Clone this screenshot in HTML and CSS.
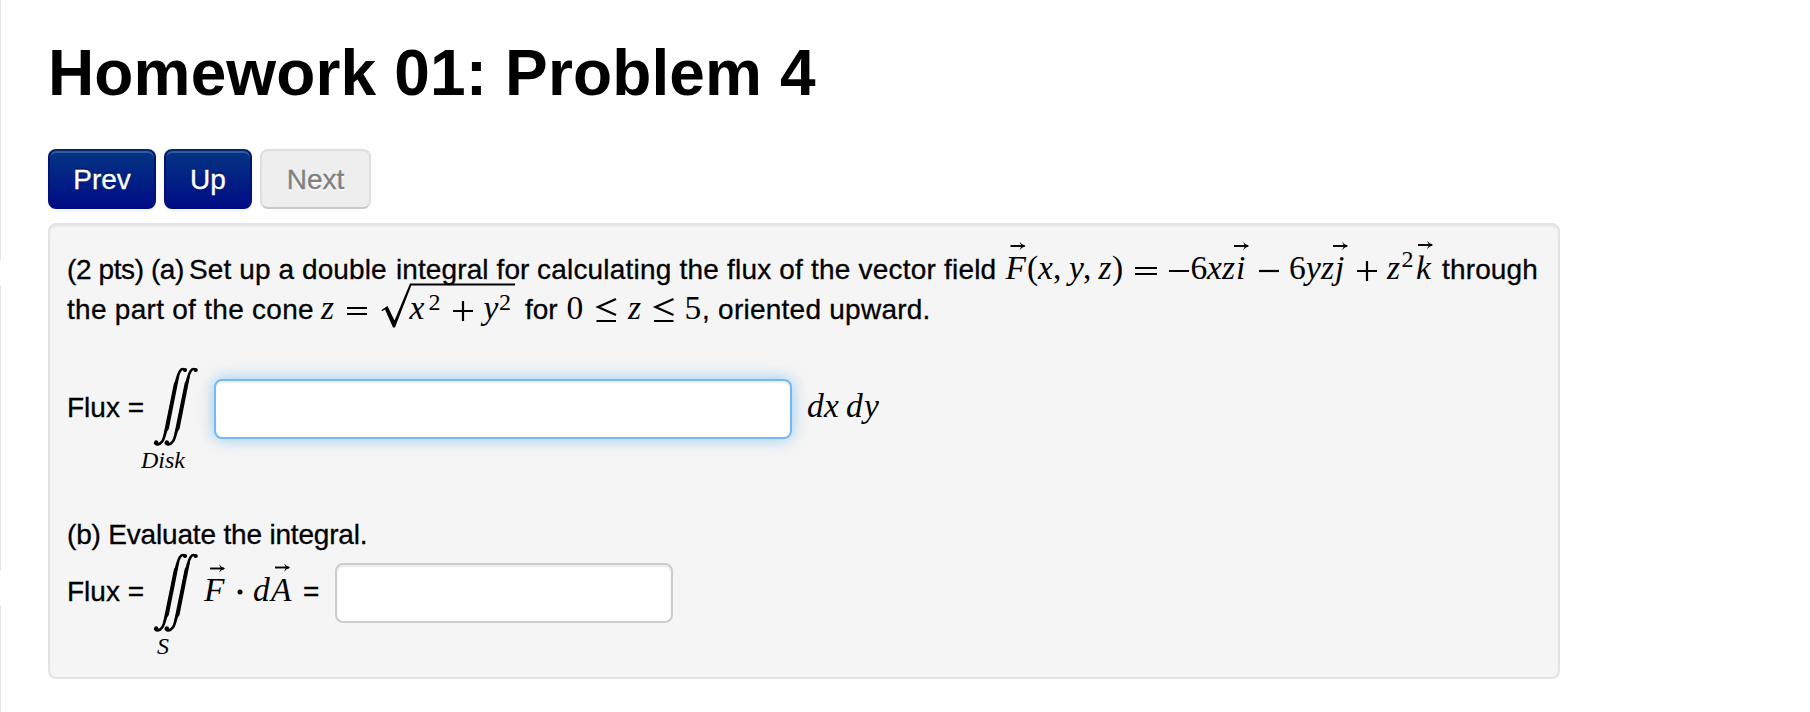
FILE: index.html
```
<!DOCTYPE html>
<html lang="en">

<head>
    <meta charset="UTF-8">
    <meta name="viewport" content="width=device-width, initial-scale=1.0">
    <title>Homework 01: Problem 4</title>
    <link rel="stylesheet" href="styles.css">
</head>

<body>
    <!-- shared math shapes -->
    <svg class="defs" width="0" height="0">
        <defs>
            <g id="vec">
                <path d="M0 0H14" fill="none" stroke="#000" stroke-width="1.9" />
                <path d="M9 -4.2Q11 -1.2 15.2 0Q11 1.2 9 4.2L11 0Z" />
            </g>
            <g id="int">
                <path d="M0.8 75.5C1.5 78 5.5 78.4 8.5 74C12 68 14 54 18 35C21 20 22.5 9 26 4C28 1.3 30 1.5 31.5 4" fill="none" stroke="#000" stroke-width="2.6" />
                <path d="M9 70L20 16L25.5 8L14.8 62Z" />
                <circle cx="2.2" cy="75.3" r="2.1" />
                <circle cx="31" cy="3" r="2.1" />
            </g>
            <g id="iint">
                <use href="#int" />
                <use href="#int" x="10.7" />
            </g>
        </defs>
    </svg>

    <div class="sidebar-edge">
        <span></span>
        <span></span>
        <span></span>
    </div>

    <main class="content">
        <h1>Homework 01: Problem 4</h1>

        <div class="nav">
            <a class="btn btn-prev">Prev</a>
            <a class="btn btn-up">Up</a>
            <a class="btn btn-next disabled">Next</a>
        </div>

        <div class="problem">
            <p class="line"><span class="points">(2 pts) (a)</span><span class="setup">Set up a double</span><span class="integral">integral for</span><span class="flux">calculating the flux of the vector field</span><svg class="math" width="445" height="20">
                    <g transform="translate(-997 20)">
                        <text class="it" x="1005.5">F</text>
                        <text x="1027">(</text>
                        <text class="it" x="1038">x</text>
                        <text x="1053">,</text>
                        <text class="it" x="1069">y</text>
                        <text x="1083">,</text>
                        <text class="it" x="1098.5">z</text>
                        <text x="1112">)</text>
                        <path class="op" d="M1135 -11H1157M1135 -5H1157M1169 -8H1189" />
                        <text x="1190.5">6</text>
                        <text class="it" x="1207">x</text>
                        <text class="it" x="1222">z</text>
                        <text class="it" x="1236">i</text>
                        <path class="op" d="M1259 -8H1279" />
                        <text x="1289">6</text>
                        <text class="it" x="1306">y</text>
                        <text class="it" x="1321">z</text>
                        <text class="it" x="1335">j</text>
                        <path class="op" d="M1357 -8H1377M1367 -18V2" />
                        <text class="it" x="1387">z</text>
                        <text class="sup" x="1401.5" y="-12.5">2</text>
                        <text class="it" x="1416">k</text>
                        <use href="#vec" x="1010.5" y="-33" />
                        <use href="#vec" x="1234" y="-33" />
                        <use href="#vec" x="1333" y="-33" />
                        <use href="#vec" x="1418" y="-34" />
                    </g>
                </svg><span class="through">through</span></p>
            <p class="line"><span class="cone">the part of the cone</span><svg class="math" width="210" height="20">
                    <g transform="translate(-315 20)">
                        <text class="it" x="321">z</text>
                        <path class="op" d="M347 -11H367M347 -5H367" />
                        <path d="M381.5 -9L387.5 -13L394.5 1.5L410 -35.5H515V-33.6H411.3L395 8.5H393L385 -9.5L382 -7.7Z" />
                        <text class="it" x="409.5">x</text>
                        <text class="sup" x="428.5" y="-9">2</text>
                        <path class="op" d="M453 -8H473M463 -18V2" />
                        <text class="it" x="483.5">y</text>
                        <text class="sup" x="499" y="-9">2</text>
                    </g>
                </svg><span class="for">for</span><svg class="math" width="140" height="20">
                    <g transform="translate(-562 20)">
                        <text x="566.5">0</text>
                        <path class="op" d="M616 -20L598 -12L616 -4M596.5 2H616" />
                        <text class="it" x="628">z</text>
                        <path class="op" d="M673.5 -20L655.5 -12L673.5 -4M654 2H673.5" />
                        <text x="684.5">5</text>
                    </g>
                </svg><span class="oriented">, oriented upward.</span></p>

            <div class="row row-a">
                <span class="label">Flux =</span>
                <svg class="math iint" width="70" height="110">
                    <use href="#iint" x="14" y="0" />
                    <text class="it sub" x="1" y="101">Disk</text>
                </svg>
                <input class="answer wide focused" type="text">
                <svg class="math diff" width="76" height="30">
                    <text class="it" x="0" y="23">d</text>
                    <text class="it" x="17" y="23">x</text>
                    <text class="it" x="39" y="23">d</text>
                    <text class="it" x="57" y="23">y</text>
                </svg>
            </div>

            <p class="line"><span class="evaluate">(b) Evaluate the integral.</span></p>
            <div class="row row-b">
                <span class="label">Flux =</span>
                <svg class="math iint" width="158" height="110">
                    <use href="#iint" x="14" y="0" />
                    <text class="it sub" x="17" y="101">S</text>
                    <text class="it" x="64" y="48">F</text>
                    <circle cx="100" cy="39" r="2.5" />
                    <text class="it" x="113" y="48">d</text>
                    <text class="it" x="131" y="48">A</text>
                    <use href="#vec" x="70" y="15.5" />
                    <use href="#vec" x="135" y="14.5" />
                </svg>
                <span class="equals">=</span>
                <input class="answer" type="text">
            </div>
        </div>
    </main>
</body>

</html>
```
FILE: styles.css
```
body {
    margin: 0;
    display: flex;
    height: 712px;
    overflow: hidden;
    background-color: #fff;
    color: #000;
    font-family: "Liberation Sans", Arial, sans-serif;
    font-size: 28px;
    line-height: 40px;
}

.defs {
    position: absolute;
}

/* right edge of the collapsed side menus */
.sidebar-edge {
    display: flex;
    flex-direction: column;
    width: 1px;
    height: 712px;
}

.sidebar-edge span {
    height: 260px;
    background-color: #e5e5e5;
}

.sidebar-edge span:nth-child(2) {
    height: 284px;
    margin: 26px 0 36px;
}

.sidebar-edge span:last-child {
    flex: 1;
}

.content {
    width: 1512px;
    padding-left: 47px;
}

h1 {
    margin: 33px 0 36px;
    font-size: 64px;
    line-height: 80px;
    font-weight: bold;
    letter-spacing: 0.14px;
    white-space: nowrap;
}

.nav {
    display: flex;
    gap: 8px;
    margin-bottom: 14px;
}

.btn {
    box-sizing: border-box;
    width: 108px;
    height: 60px;
    border: 2px solid #001a70;
    border-color: #00266e #001275 #000d80;
    border-radius: 8px;
    background-image: linear-gradient(#043583, #000c85);
    box-shadow: inset 0 2px 0 rgba(255, 255, 255, 0.2), 0 2px 4px rgba(0, 0, 0, 0.05);
    color: #fff;
    text-align: center;
    line-height: 58px;
    text-shadow: 0 -2px 0 rgba(0, 0, 0, 0.25);
    -webkit-text-stroke: 0.3px;
}

.btn-up {
    width: 88px;
}

.btn-next {
    width: 111px;
}

.btn.disabled {
    border-color: #dedede #dedede #c8c8c8;
    background: #eee;
    box-shadow: none;
    color: #808080;
    text-shadow: 0 2px 0 #fff;
}

.problem {
    box-sizing: border-box;
    width: 1512px;
    height: 456px;
    padding: 25px 17px 0;
    border: 2px solid #e3e3e3;
    border-radius: 8px;
    background-color: #f5f5f5;
    box-shadow: inset 0 2px 2px rgba(0, 0, 0, 0.05);
    -webkit-text-stroke: 0.3px;
}

.line {
    margin: 0;
    height: 40px;
    white-space: nowrap;
}

.line span {
    display: inline-block;
}

.points {
    width: 122px;
    letter-spacing: -0.4px;
}

.setup {
    width: 207px;
    letter-spacing: 0.1px;
}

.integral {
    width: 141px;
    letter-spacing: 0.1px;
}

.flux {
    width: 460px;
    letter-spacing: 0.2px;
}

.through {
    width: 100px;
    letter-spacing: 0.15px;
}

.cone {
    width: 248px;
    letter-spacing: 0.28px;
}

.for {
    width: 37px;
}

.oriented {
    letter-spacing: 0.25px;
}

.evaluate {
    letter-spacing: -0.18px;
}

.math {
    overflow: visible;
    font-family: "Liberation Serif", "Times New Roman", serif;
    font-size: 33.5px;
}

.math .it {
    font-style: italic;
}

.math .sup {
    font-size: 24px;
}

.math .sub {
    font-size: 24px;
}

.math .op {
    fill: none;
    stroke: #000;
    stroke-width: 2.2;
}

.row {
    display: flex;
    align-items: flex-start;
}

.row-a {
    margin-top: 37px;
    height: 148px;
}

.row-a .label {
    margin-top: 21px;
}

.row-b {
    margin-top: -2px;
}

.label {
    width: 73px;
    margin-top: 19px;
    white-space: nowrap;
}

.equals {
    width: 32px;
    margin: 19px 0 0 5px;
}

.answer {
    box-sizing: border-box;
    width: 338px;
    height: 60px;
    margin: 10px 0 0;
    padding: 8px 12px;
    border: 2px solid #ccc;
    border-radius: 8px;
    background-color: #fff;
    box-shadow: inset 0 2px 2px rgba(0, 0, 0, 0.075);
    font: inherit;
}

.answer.wide {
    width: 578px;
    margin: 12px 0 0 4px;
}

.answer.focused {
    outline: 0;
    border-color: #75b9f0;
    box-shadow: inset 0 2px 2px rgba(0, 0, 0, 0.075), 0 0 16px rgba(82, 168, 236, 0.6);
}

.diff {
    margin: 27px 0 0 15px;
}
```
